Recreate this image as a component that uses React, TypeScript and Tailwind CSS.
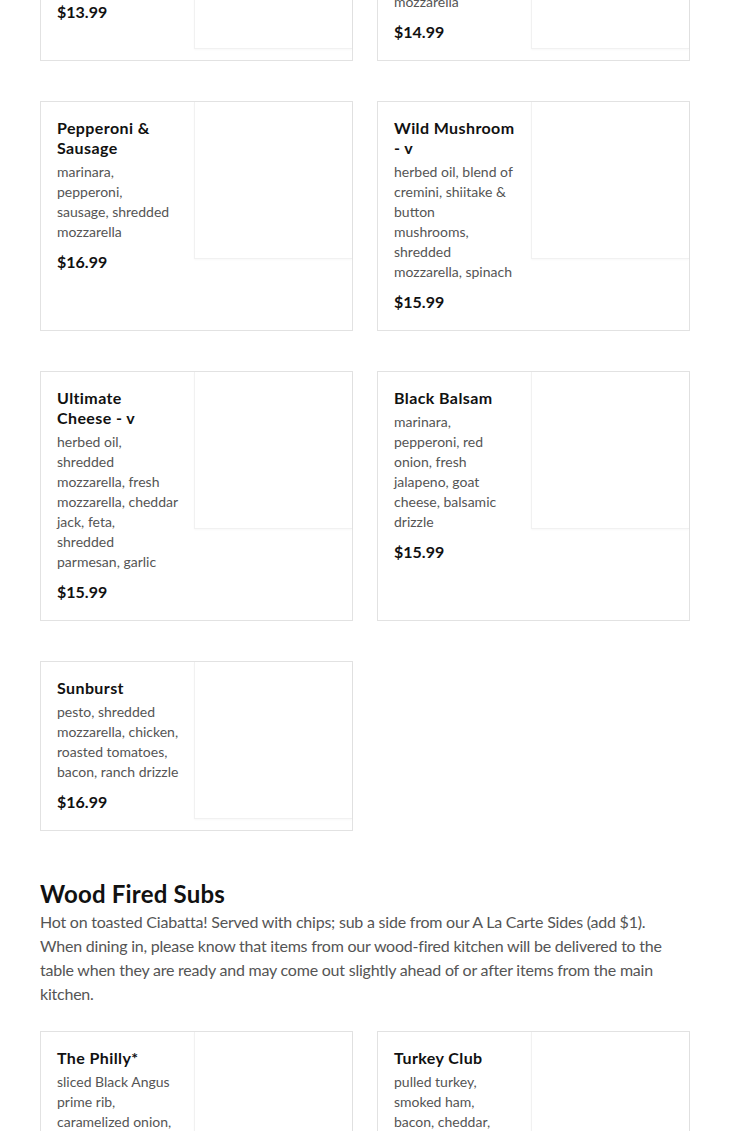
import React from 'react';

interface MenuItem {
  name: string;
  description: string;
  price: string;
}

// line breaks follow the original menu's narrow text column
const topRow: MenuItem[] = [
  { name: 'Margherita - v', description: 'marinara, basil,\nfresh mozzarella,\nolive oil', price: '$13.99' },
  { name: 'Pepperoni', description: 'marinara,\npepperoni,\nshredded\nmozzarella', price: '$14.99' },
];

const pizzas: MenuItem[] = [
  { name: 'Pepperoni &\nSausage', description: 'marinara,\npepperoni,\nsausage, shredded\nmozzarella', price: '$16.99' },
  { name: 'Wild Mushroom\n- v', description: 'herbed oil, blend of\ncremini, shiitake &\nbutton\nmushrooms,\nshredded\nmozzarella, spinach', price: '$15.99' },
  { name: 'Ultimate\nCheese - v', description: 'herbed oil,\nshredded\nmozzarella, fresh\nmozzarella, cheddar\njack, feta,\nshredded\nparmesan, garlic', price: '$15.99' },
  { name: 'Black Balsam', description: 'marinara,\npepperoni, red\nonion, fresh\njalapeno, goat\ncheese, balsamic\ndrizzle', price: '$15.99' },
  { name: 'Sunburst', description: 'pesto, shredded\nmozzarella, chicken,\nroasted tomatoes,\nbacon, ranch drizzle', price: '$16.99' },
];

const subs: MenuItem[] = [
  { name: 'The Philly*', description: 'sliced Black Angus\nprime rib,\ncaramelized onion,\npeppers, provolone,\nhorseradish aioli', price: '$16.99' },
  { name: 'Turkey Club', description: 'pulled turkey,\nsmoked ham,\nbacon, cheddar,\nlettuce, tomato,\nmayo', price: '$15.99' },
];

function MenuCard({ item }: { item: MenuItem }) {
  return (
    <div className="flex border border-[#e2e2e2] bg-white">
      <div className="min-w-0 flex-1 px-4 pt-4 pb-[18px]">
        <h3 className="mb-1 whitespace-pre text-base font-bold leading-5 tracking-[0.4px] text-[#111]">{item.name}</h3>
        <p className="whitespace-pre text-sm leading-5 text-[#555]">{item.description}</p>
        <p className="mt-[10px] text-base font-bold leading-5 text-[#111]">{item.price}</p>
      </div>
      {/* photo placeholder */}
      <div className="h-[157px] w-[158px] shrink-0 border-b border-l border-[#f1f1f1] bg-white shadow-[0_1px_2px_rgba(0,0,0,0.03)]" />
    </div>
  );
}

export default function App() {
  return (
    <div className="min-h-screen overflow-hidden bg-white font-['Lato',sans-serif]">
      <div className="px-10">
        <div className="-mt-[109px] grid grid-cols-2 gap-x-6 gap-y-10">
          {topRow.map(item => (
            <MenuCard key={item.name} item={item} />
          ))}
          {pizzas.map(item => (
            <MenuCard key={item.name} item={item} />
          ))}
        </div>

        <section className="mt-12">
          <h2 className="mb-0.5 text-2xl font-bold leading-[29px] tracking-[0.2px] text-[#111]">Wood Fired Subs</h2>
          <p className="mb-[25px] whitespace-nowrap text-base leading-6 tracking-[-0.22px] text-[#555]">
            Hot on toasted Ciabatta! Served with chips; sub a side from our A La Carte Sides (add $1).
            <br />
            When dining in, please know that items from our wood-fired kitchen will be delivered to the
            <br />
            table when they are ready and may come out slightly ahead of or after items from the main
            <br />
            kitchen.
          </p>
          <div className="grid grid-cols-2 gap-x-6 gap-y-10">
            {subs.map(item => (
              <MenuCard key={item.name} item={item} />
            ))}
          </div>
        </section>
      </div>
    </div>
  );
}
